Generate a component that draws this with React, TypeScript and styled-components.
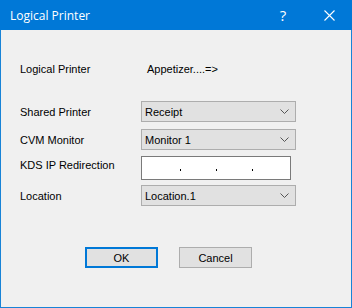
import styled, { createGlobalStyle } from 'styled-components';

const GlobalStyle = createGlobalStyle`
  html, body {
    margin: 0;
    padding: 0;
    background: #ffffff;
  }
`;

const Window = styled.div`
  width: 352px;
  height: 308px;
  box-sizing: border-box;
  border: 1px solid #1883d7;
  border-top: none;
  background: #f0f0f0;
  display: flex;
  flex-direction: column;
  font-family: 'Liberation Sans', Arial, sans-serif;
  font-size: 11px;
  color: #000;
`;

const TitleBar = styled.div`
  height: 30px;
  margin: 0 -1px;
  background: #0078d7;
  color: #fff;
  display: flex;
  align-items: center;
  padding-left: 10px;
  font-family: 'Open Sans', 'Noto Sans', sans-serif;
  font-size: 12px;
`;

const Title = styled.span`
  flex: 1;
`;

const TitleButton = styled.div`
  width: 46px;
  height: 30px;
  display: flex;
  align-items: center;
  justify-content: center;
  font-size: 15px;
`;

const Body = styled.div`
  flex: 1;
  padding: 32px 0 0 19px;
  display: flex;
  flex-direction: column;
`;

// label column + control column
const Row = styled.div<{ $top?: number }>`
  display: grid;
  grid-template-columns: 121px 155px;
  align-items: center;
  margin-top: ${({ $top }) => $top ?? 6}px;
`;

// the edit box label sits a bit higher than the box centre
const Label = styled.span<{ $raised?: boolean }>`
  line-height: 14px;
  margin-bottom: ${({ $raised }) => ($raised ? '6px' : '0')};
`;

const Value = styled.span`
  padding-left: 6px;
  line-height: 14px;
`;

const Combo = styled.div`
  height: 21px;
  box-sizing: border-box;
  border: 1px solid #adadad;
  background: #e1e1e1;
  display: flex;
  align-items: center;
  padding: 0 6px 0 3px;
  justify-content: space-between;
`;

const IpEdit = styled.div`
  width: 150px;
  height: 24px;
  box-sizing: border-box;
  border: 1px solid #7a7a7a;
  background: #fff;
  display: flex;
  align-items: flex-start;
  gap: 35px;
  padding: 12px 0 0 38px;
`;

const Dot = styled.span`
  width: 1px;
  height: 2px;
  background: #000;
`;

const Buttons = styled.div`
  display: flex;
  gap: 21px;
  margin-top: 41px;
  padding-left: 65px;
`;

const Button = styled.button<{ $default?: boolean }>`
  width: 73px;
  height: 21px;
  box-sizing: border-box;
  background: #e1e1e1;
  border: ${({ $default }) => ($default ? '2px solid #0078d7' : '1px solid #adadad')};
  font-family: inherit;
  font-size: 11px;
  color: #000;
  padding: 0;
`;

const Chevron = () => (
  <svg width="9" height="5" viewBox="0 0 9 5">
    <path d="M0.5 0.5 L4.5 4.5 L8.5 0.5" fill="none" stroke="#555" strokeWidth="1" />
  </svg>
);

const CloseIcon = () => (
  <svg width="11" height="11" viewBox="0 0 11 11">
    <path d="M0.5 0.5 L10.5 10.5 M10.5 0.5 L0.5 10.5" stroke="#fff" strokeWidth="1.1" />
  </svg>
);

const App = () => {
  return (
    <>
      <GlobalStyle />
      <Window>
        <TitleBar>
          <Title>Logical Printer</Title>
          <TitleButton>?</TitleButton>
          <TitleButton>
            <CloseIcon />
          </TitleButton>
        </TitleBar>

        <Body>
          <Row $top={0}>
            <Label>Logical Printer</Label>
            <Value>Appetizer....=&gt;</Value>
          </Row>

          <Row $top={25}>
            <Label>Shared Printer</Label>
            <Combo>
              <span>Receipt</span>
              <Chevron />
            </Combo>
          </Row>

          <Row $top={7}>
            <Label>CVM Monitor</Label>
            <Combo>
              <span>Monitor 1</span>
              <Chevron />
            </Combo>
          </Row>

          <Row>
            <Label $raised>KDS IP Redirection</Label>
            <IpEdit>
              <Dot />
              <Dot />
              <Dot />
            </IpEdit>
          </Row>

          <Row $top={5}>
            <Label>Location</Label>
            <Combo>
              <span>Location.1</span>
              <Chevron />
            </Combo>
          </Row>

          <Buttons>
            <Button $default>OK</Button>
            <Button>Cancel</Button>
          </Buttons>
        </Body>
      </Window>
    </>
  );
};

export default App;
